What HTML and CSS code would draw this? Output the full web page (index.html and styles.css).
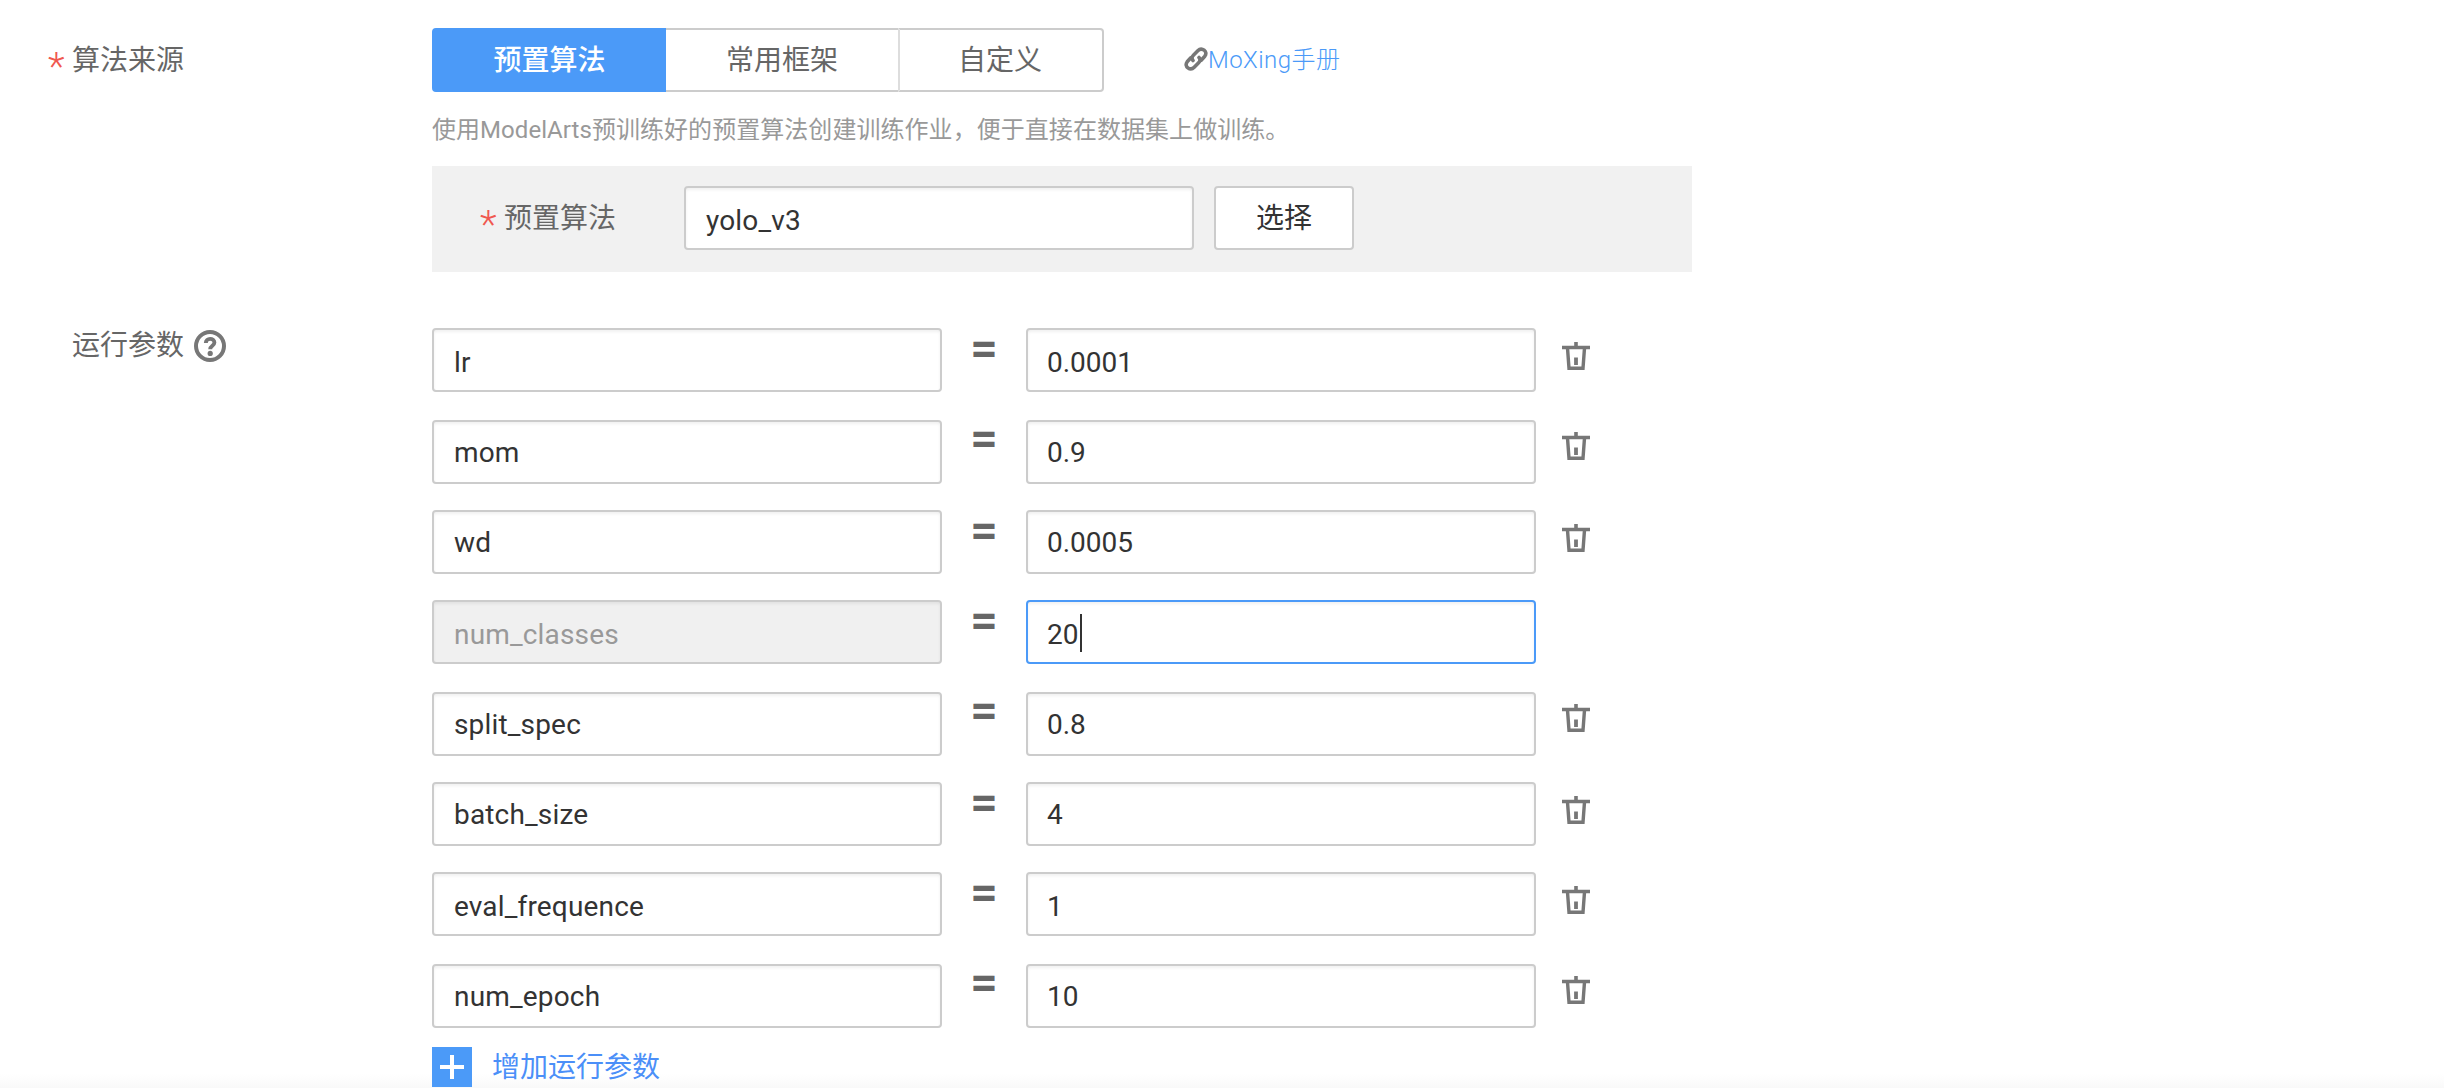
FILE: index.html
```html
<!DOCTYPE html>
<html lang="zh-CN">
<head>
<meta charset="utf-8">
<title>创建训练作业</title>
<link rel="stylesheet" href="styles.css">
</head>
<body>
<svg class="symbols" aria-hidden="true">
  <symbol id="trash" viewBox="0 0 28 28">
    <path d="M0 5.500h28M14 0v6" fill="none" stroke="currentColor" stroke-width="3.6"/>
    <path d="M5.500 6l1.500 20.300h14L22.500 6" fill="none" stroke="currentColor" stroke-width="3.400"/>
    <path d="M14 15.500v7.500" fill="none" stroke="currentColor" stroke-width="3.800"/>
  </symbol>
</svg>
<main class="form">
  <section class="field field-source">
    <div class="label"><span class="required">*</span><span>算法来源</span></div>
    <div class="content">
      <div class="source">
        <div class="tabs">
          <button class="tab tab-active">预置算法</button>
          <button class="tab tab-frame">常用框架</button>
          <button class="tab tab-custom">自定义</button>
        </div>
        <a class="manual">
          <svg class="link-icon" viewBox="0 0 24 24" fill="none" stroke="currentColor" stroke-width="3.600" stroke-linecap="round" stroke-linejoin="round">
            <path d="M9 13.500c-1.800-2-1.300-3.600.4-5.300l4.400-4.500c4-4 10.600.8 7 5.500l-3.600 4"/>
            <path d="M15 10.500c1.800 2 1.300 3.600-.4 5.300l-4.400 4.500c-4 4-10.600-.8-7-5.500l3.600-4"/>
          </svg><span>MoXing手册</span>
        </a>
      </div>
      <p class="hint">使用ModelArts预训练好的预置算法创建训练作业，便于直接在数据集上做训练。</p>
      <div class="panel">
        <div class="panel-label"><span class="required">*</span><span>预置算法</span></div>
        <div class="input input-name input-low">yolo_v3</div>
        <button class="choose">选择</button>
      </div>
    </div>
  </section>
  <section class="field">
    <div class="label label-params"><span>运行参数</span>
      <svg class="help" viewBox="0 0 32 32" fill="none" stroke="currentColor">
        <circle cx="16" cy="16" r="14" stroke-width="4"/>
        <path d="M11.800 13c0-5.500 8.600-5.300 8.600-.4 0 3.200-4.200 3-4.200 6.600" stroke-width="3.900"/>
        <circle cx="16.200" cy="23.400" r="2.600" fill="currentColor" stroke="none"/>
      </svg>
    </div>
    <div class="content">
      <div class="params">
        <div class="row"><div class="input input-name">lr</div><span class="eq">=</span><div class="input">0.0001</div><svg class="trash"><use href="#trash"/></svg></div>
        <div class="row"><div class="input input-name">mom</div><span class="eq">=</span><div class="input">0.9</div><svg class="trash"><use href="#trash"/></svg></div>
        <div class="row"><div class="input input-name">wd</div><span class="eq">=</span><div class="input">0.0005</div><svg class="trash"><use href="#trash"/></svg></div>
        <div class="row"><div class="input input-name input-disabled">num_classes</div><span class="eq">=</span><div class="input input-focus">20<i class="caret"></i></div></div>
        <div class="row"><div class="input input-name">split_spec</div><span class="eq">=</span><div class="input">0.8</div><svg class="trash"><use href="#trash"/></svg></div>
        <div class="row"><div class="input input-name">batch_size</div><span class="eq">=</span><div class="input">4</div><svg class="trash"><use href="#trash"/></svg></div>
        <div class="row"><div class="input input-name">eval_frequence</div><span class="eq">=</span><div class="input">1</div><svg class="trash"><use href="#trash"/></svg></div>
        <div class="row"><div class="input input-name">num_epoch</div><span class="eq">=</span><div class="input">10</div><svg class="trash"><use href="#trash"/></svg></div>
      </div>
      <a class="add">
        <svg class="plus" viewBox="0 0 40 40"><path d="M8 20h24M20 8v24" stroke="#fff" stroke-width="4"/></svg>
        <span>增加运行参数</span>
      </a>
    </div>
  </section>
</main>
</body>
</html>
```
FILE: styles.css
```css
* { box-sizing: border-box; }

body {
  margin: 0;
  height: 1088px;
  overflow: hidden;
  background: linear-gradient(#fff 1074px, #f9f9f9 1088px);
  color: #666;
  font-family: Roboto, "Noto Sans CJK SC", sans-serif;
  font-size: 28px;
  line-height: 40px;
}

button { font: inherit; margin: 0; padding: 0; background: #fff; }

.symbols { display: none; }

.form { padding: 28px 0 0 48px; }

.field { display: flex; }
.field-source { margin-bottom: 56px; }

.label { display: flex; width: 384px; padding-top: 13px; }
.label-params { padding: 0 0 0 24px; margin-top: -2px; }

.required {
  width: 24px;
  color: #f0584f;
  font-size: 39px;
  font-weight: 300;
  line-height: 53px;
  height: 40px;
}

.help { width: 32px; height: 32px; margin: 4px 0 0 10px; color: #777; }

.source { display: flex; align-items: center; }

.tabs { display: flex; width: 672px; height: 64px; }
.tab { border: 2px solid #ccc; color: #666; padding-top: 1px; }
.tab-active { width: 234px; padding-left: 1px; border-color: #4b9af8; border-radius: 4px 0 0 4px; background: #4b9af8; color: #fff; font-weight: 500; }
.tab-frame { width: 232px; border-width: 2px 0; }
.tab-custom { width: 206px; padding-right: 2px; border-left: 2px solid #ddd; border-radius: 0 4px 4px 0; }

.manual { display: flex; align-items: center; margin-left: 80px; color: #4b9af8; font-size: 24px; font-weight: 300; letter-spacing: .45px; }
.link-icon { width: 24px; height: 24px; margin: -3px 0 0; color: #777; }

.hint { margin: 18px 0 16px; color: #999; font-size: 24px; letter-spacing: .05px; }

.panel { display: flex; align-items: flex-start; width: 1260px; height: 106px; padding: 20px 0 0 48px; background: #f1f1f1; }
.panel-label { display: flex; width: 204px; padding-top: 13px; }

.input {
  width: 510px;
  height: 64px;
  padding: 11px 19px;
  border: 2px solid #ccc;
  border-radius: 4px;
  background: #fff;
  box-shadow: inset 0 2px 3px rgba(0, 0, 0, .06);
  color: #333;
  line-height: 40px;
  white-space: nowrap;
}
.input-name { padding-left: 20px; letter-spacing: .17px; }
.input-low { padding-top: 13px; }
.input-disabled { background: #f0f0f0; color: #999; }
.input-focus { display: flex; border-color: #4b9af8; }
.caret { width: 2px; height: 38px; margin: -1px 0 0 2px; background: #333; }

.choose { width: 140px; height: 64px; margin-left: 20px; padding-top: 1px; border: 2px solid #ccc; border-radius: 4px; color: #333; }

.row { display: flex; height: 64px; margin-bottom: 26px; }
.row:nth-child(3n+1) { margin-bottom: 28px; }
.row:nth-child(3n+1) .input { padding-top: 13px; }
.row:last-child { margin-bottom: 0; }

.eq { width: 84px; height: 40px; margin-top: 1px; font-size: 48px; font-weight: 700; text-align: center; }
.trash { width: 28px; height: 28px; margin: 14px 0 0 26px; color: #777; }
.row:nth-child(3n+2) .eq { margin-top: -1px; }
.row:nth-child(3n+2) .trash { margin-top: 12px; }

.add { display: flex; align-items: center; margin-top: 18px; color: #4b8ff8; }
.add span { padding-top: 2px; }
.plus { width: 40px; height: 40px; margin-right: 20px; background: #4b9af8; }
```
